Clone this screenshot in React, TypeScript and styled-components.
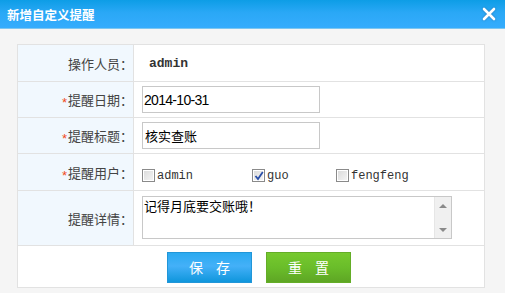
import styled, { createGlobalStyle } from "styled-components";

const GlobalStyle = createGlobalStyle`
  html, body {
    margin: 0;
    padding: 0;
    background: #f5f5f5;
  }
  body {
    width: 505px;
    height: 293px;
    overflow: hidden;
    font-family: "Noto Sans CJK SC", "Liberation Sans", sans-serif;
  }
`;

const Dialog = styled.div`
  width: 505px;
  height: 293px;
  display: flex;
  flex-direction: column;
  background: #f5f5f5;
`;

const TitleBar = styled.div`
  height: 29px;
  box-sizing: border-box;
  display: flex;
  align-items: center;
  justify-content: space-between;
  padding: 0 8px 0 7px;
  background: linear-gradient(#0d9de6, #2aa8f6 45%, #35acfd);
  border-bottom: 1px solid #7dc6f0;
`;

const Title = styled.h1`
  margin: 0;
  font-size: 12.5px;
  font-weight: bold;
  color: #fff;
`;

const Close = styled.svg`
  width: 16px;
  height: 16px;
  filter: drop-shadow(0 0 1px rgba(40, 90, 140, 0.6));
`;

const Body = styled.div`
  padding: 15px 20px 0 17px;
`;

const Form = styled.div`
  border: 1px solid #e2e2e2;
  background: #fff;
`;

const Row = styled.div<{ $h: number }>`
  display: grid;
  grid-template-columns: 116px 1fr;
  height: ${(p) => p.$h}px;
  border-top: 1px solid #e2e2e2;
  &:first-child {
    border-top: none;
  }
`;

const Label = styled.div`
  background: #f1f8fe;
  border-right: 1px solid #e2e2e2;
  display: flex;
  align-items: center;
  justify-content: flex-end;
  padding-right: 0;
  font-size: 13px;
  color: #444;
`;

const Star = styled.span`
  color: #f04a1a;
  font-family: "Liberation Sans", sans-serif;
  font-size: 13px;
  margin-right: 1px;
  position: relative;
  top: 3px;
`;

const Cell = styled.div`
  display: flex;
  align-items: center;
  padding-left: 8px;
`;

const Value = styled.span`
  font-family: "Liberation Mono", monospace;
  font-weight: bold;
  font-size: 13px;
  color: #333;
  padding-left: 7px;
`;

const Input = styled.div`
  width: 174px;
  height: 25px;
  border: 1px solid #c8c8c8;
  display: flex;
  align-items: center;
  padding-left: 2px;
  font-size: 13px;
  color: #000;
`;

const DateText = styled.span`
  font-family: "Liberation Sans", sans-serif;
  font-size: 14px;
  letter-spacing: -0.7px;
  margin-left: -1px;
`;

const Users = styled.div`
  display: flex;
  align-items: center;
  padding-top: 7px;
`;

const UserItem = styled.label<{ $w: number }>`
  width: ${(p) => p.$w}px;
  display: flex;
  align-items: center;
  font-family: "Liberation Mono", monospace;
  font-size: 12px;
  color: #333;
`;

const Box = styled.span`
  width: 11px;
  height: 11px;
  border: 1px solid #8a8a8a;
  background: linear-gradient(135deg, #d9d9d9, #f6f6f6);
  box-shadow: inset 0 0 0 1px #fff;
  display: flex;
  align-items: center;
  justify-content: center;
  margin-right: 2px;
`;

const TextArea = styled.div`
  margin-top: 5px;
  align-self: flex-start;
  width: 308px;
  height: 41px;
  border: 1px solid #c8c8c8;
  display: flex;
`;

const AreaText = styled.div`
  flex: 1;
  font-size: 13px;
  line-height: 15px;
  color: #000;
  padding: 1px 1px;
`;

const Scroll = styled.div`
  width: 16px;
  background: #f0f0f0;
  border-left: 1px solid #e6e6e6;
  display: flex;
  flex-direction: column;
  justify-content: space-between;
  align-items: center;
  padding: 7px 0 6px;
`;

const Arrow = styled.span<{ $down?: boolean }>`
  width: 0;
  height: 0;
  border-left: 4px solid transparent;
  border-right: 4px solid transparent;
  ${(p) =>
    p.$down
      ? "border-top: 4px solid #8a8a8a;"
      : "border-bottom: 4px solid #8a8a8a;"}
`;

const Actions = styled.div`
  height: 41px;
  border-top: 1px solid #e2e2e2;
  display: flex;
  align-items: center;
  padding-left: 149px;
  gap: 14px;
`;

const Button = styled.button<{ $tone: "blue" | "green" }>`
  width: 85px;
  height: 31px;
  box-sizing: border-box;
  margin-top: 1px;
  border: 1px solid ${(p) => (p.$tone === "blue" ? "#2196d8" : "#64ad27")};
  background: ${(p) =>
    p.$tone === "blue"
      ? "linear-gradient(#2aaaf0, #44b0f8 45%, #0f96dc)"
      : "linear-gradient(#76c92e, #6abd2a 50%, #5ea624)"};
  color: #fff;
  font-family: "Noto Sans CJK SC", sans-serif;
  font-size: 14px;
  letter-spacing: 13px;
  text-indent: 13px;
  padding: 0;
  cursor: pointer;
`;

const users = [
  { name: "admin", w: 110, checked: false },
  { name: "guo", w: 84, checked: true },
  { name: "fengfeng", w: 90, checked: false },
];

export default function App() {
  return (
    <>
      <GlobalStyle />
      <Dialog>
        <TitleBar>
          <Title>新增自定义提醒</Title>
          <Close viewBox="0 0 16 16">
            <path
              d="M3 3 L13 13 M13 3 L3 13"
              stroke="#fff"
              strokeWidth="2.6"
              strokeLinecap="round"
            />
          </Close>
        </TitleBar>
        <Body>
          <Form>
            <Row $h={36}>
              <Label>操作人员：</Label>
              <Cell>
                <Value>admin</Value>
              </Cell>
            </Row>
            <Row $h={35}>
              <Label>
                <Star>*</Star>提醒日期：
              </Label>
              <Cell>
                <Input>
                  <DateText>2014-10-31</DateText>
                </Input>
              </Cell>
            </Row>
            <Row $h={35}>
              <Label>
                <Star>*</Star>提醒标题：
              </Label>
              <Cell>
                <Input>核实查账</Input>
              </Cell>
            </Row>
            <Row $h={36}>
              <Label>
                <Star>*</Star>提醒用户：
              </Label>
              <Cell>
                <Users>
                  {users.map((u) => (
                    <UserItem key={u.name} $w={u.w}>
                      <Box>
                        {u.checked && (
                          <svg width="10" height="10" viewBox="0 0 10 10">
                            <path
                              d="M1.5 5 L4 8 L8.8 1"
                              stroke="#2a4fa8"
                              strokeWidth="1.8"
                              fill="none"
                            />
                          </svg>
                        )}
                      </Box>
                      {u.name}
                    </UserItem>
                  ))}
                </Users>
              </Cell>
            </Row>
            <Row $h={54}>
              <Label>提醒详情：</Label>
              <Cell>
                <TextArea>
                  <AreaText>记得月底要交账哦！</AreaText>
                  <Scroll>
                    <Arrow />
                    <Arrow $down />
                  </Scroll>
                </TextArea>
              </Cell>
            </Row>
            <Actions>
              <Button $tone="blue">保存</Button>
              <Button $tone="green">重置</Button>
            </Actions>
          </Form>
        </Body>
      </Dialog>
    </>
  );
}
